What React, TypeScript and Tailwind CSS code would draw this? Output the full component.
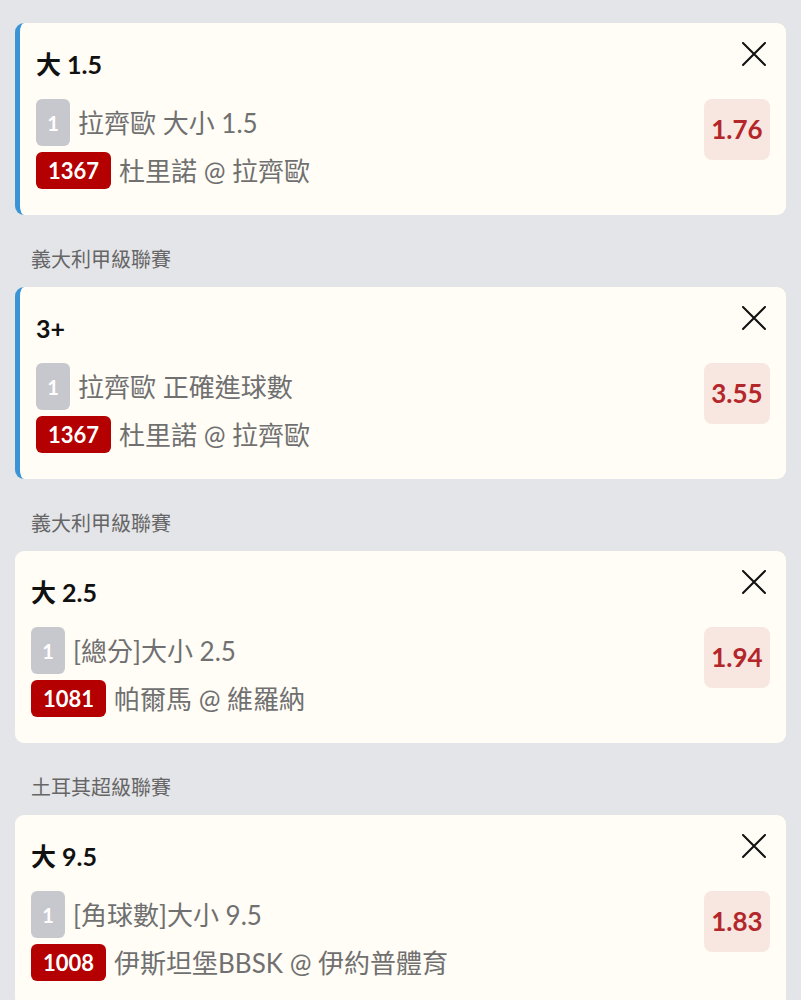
import React from 'react';

type Bet = {
    league?: string;
    title: string;
    market: string;
    code: string;
    match: string;
    odds: string;
    active: boolean;
};

const bets: Bet[] = [
    { title: '大 1.5', market: '拉齊歐 大小 1.5', code: '1367', match: '杜里諾 @ 拉齊歐', odds: '1.76', active: true },
    { league: '義大利甲級聯賽', title: '3+', market: '拉齊歐 正確進球數', code: '1367', match: '杜里諾 @ 拉齊歐', odds: '3.55', active: true },
    { league: '義大利甲級聯賽', title: '大 2.5', market: '[總分]大小 2.5', code: '1081', match: '帕爾馬 @ 維羅納', odds: '1.94', active: false },
    { league: '土耳其超級聯賽', title: '大 9.5', market: '[角球數]大小 9.5', code: '1008', match: '伊斯坦堡BBSK @ 伊約普體育', odds: '1.83', active: false },
];

const CloseIcon: React.FC = () => (
    <svg width="24" height="24" viewBox="0 0 24 24" className="mr-[4px]">
        <path d="M1 1 L23 23 M23 1 L1 23" stroke="#111" strokeWidth="2" fill="none" strokeLinecap="round" />
    </svg>
);

const BetCard: React.FC<{ bet: Bet }> = ({ bet }) => (
    <div
        className={`flex rounded-[9px] bg-[#fffdf6] ${bet.active ? 'border-l-[5px] border-[#3a94d6]' : ''}`}
    >
        <div className="flex-1 pl-4 pt-[26px] pb-[26px]">
            <div className="h-[32px] flex items-center text-[25px] font-bold text-[#111]">{bet.title}</div>
            <div className="mt-[18px] flex items-center gap-[8px]">
                <span className="w-[34px] h-[47px] rounded-[6px] bg-[#c7c8ce] text-white font-bold text-[20px] flex items-center justify-center">
                    1
                </span>
                <span className="text-[26px] text-[#707070] leading-none">{bet.market}</span>
            </div>
            <div className="mt-[6px] flex items-center gap-[8px]">
                <span className="h-[37px] px-3 rounded-[6px] bg-[#b40000] text-white font-bold text-[22px] flex items-center">
                    {bet.code}
                </span>
                <span className="text-[26px] text-[#707070] leading-none">{bet.match}</span>
            </div>
        </div>
        <div className="flex flex-col items-end pr-4 pt-[19px]">
            <CloseIcon />
            <div className="mt-[33px] w-[66px] h-[61px] rounded-[8px] bg-[#f8e6e0] flex items-center justify-center text-[26px] font-bold text-[#b3272b]">
                {bet.odds}
            </div>
        </div>
    </div>
);

const App: React.FC = () => {
    return (
        <div
            className="min-h-screen bg-[#e4e5e9] px-[15px] pt-[23px] pb-8"
            style={{ fontFamily: 'Lato, "Noto Sans CJK TC", "Noto Sans", sans-serif' }}
        >
            {bets.map((bet, i) => (
                <div key={i}>
                    {bet.league && (
                        <div className="pt-[30px] pb-[14px] pl-4 text-[20px] leading-[28px] text-[#666]">{bet.league}</div>
                    )}
                    <BetCard bet={bet} />
                </div>
            ))}
        </div>
    );
};

export default App;
